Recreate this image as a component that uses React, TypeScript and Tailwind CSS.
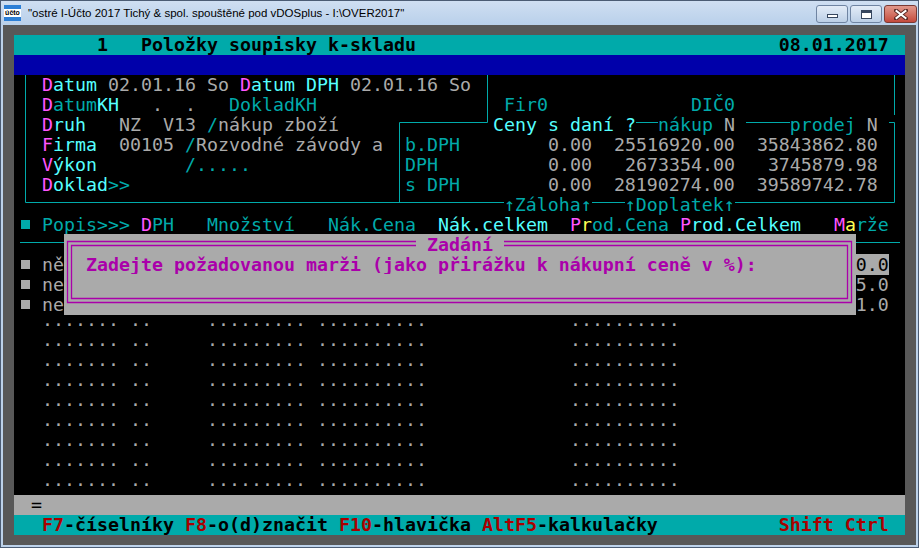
import React from 'react';

type Seg = [number, string, string];

const T = 'text-[#00aaaa]';
const C = 'text-[#55ffff]';
const M = 'text-[#ff55ff]';
const G = 'text-[#aaaaaa]';
const Y = 'text-[#ffff55]';
const K = 'text-black';
const R = 'text-[#aa0000]';
const DLG = 'bg-[#aaaaaa] text-[#aa00aa]';

function pad(s: string, n: number) {
  const len = [...s].length;
  return len >= n ? s : s + ' '.repeat(n - len);
}

function Row({ segs, bg = 'bg-black', bold = false }: { segs: Seg[]; bg?: string; bold?: boolean }) {
  const children: React.ReactNode[] = [];
  let col = 0;
  segs.forEach(([c, text, cls], i) => {
    if (c > col) children.push(' '.repeat(c - col));
    if (text === '■') {
      children.push(
        <span key={i} className="inline-flex h-[20px] w-[11px] items-start justify-center pt-[5px] align-top">
          <span className={`block h-[9px] w-[9px] ${cls}`} />
        </span>
      );
    } else {
      children.push(
        <span key={i} className={cls}>
          {text}
        </span>
      );
    }
    col = c + [...text].length;
  });
  return (
    <div className={`h-[20px] w-[891px] pl-[6px] whitespace-pre leading-[20px] ${bg} ${bold ? 'font-bold' : 'font-normal'}`}>
      {children}
    </div>
  );
}

const dots: Seg[] = [
  [2, '·······', G],
  [10, '··', G],
  [17, '·········', G],
  [27, '··········', G],
  [50, '··········', G],
];

const blank72 = ' '.repeat(72);
const dlgTitle = ' '.repeat(33) + 'Zadání' + ' '.repeat(33);
const dlgText = pad('  Zadejte požadovanou marži (jako přirážku k nákupní ceně v %):', 72);

function Lines() {
  const teal = '#00aaaa';
  const mag = '#aa00aa';
  return (
    <svg className="absolute left-[6px] top-0" width="880" height="500" viewBox="0 0 880 500">
      <g stroke={teal} strokeWidth="1" fill="none">
        <path d="M5.5 40 V167.5 H484" />
        <path d="M572 167.5 H605" />
        <path d="M715 167.5 H874.5 V87.5 H869" />
        <path d="M467.5 40 V87.5 H379.5 V167.5" />
        <path d="M616 87.5 H638" />
        <path d="M726 87.5 H770" />
        <path d="M874.5 40 V80" />
        <path d="M0 207.5 H44" />
        <path d="M836 207.5 H880" />
      </g>
      <g stroke={mag} strokeWidth="1.3" fill="none">
        <path d="M396 206.5 H47.5 V267.5 H831.5 V206.5 H484" />
        <path d="M396 210.5 H51.5 V263.5 H827.5 V210.5 H484" />
      </g>
    </svg>
  );
}

function DosScreen() {
  return (
    <div className="relative w-[891px] font-['DejaVu_Sans_Mono',monospace] text-[18.27px]">
      <Row bg="bg-[#00aaaa]" bold segs={[[7, '1', K], [11, 'Položky soupisky k-skladu', K], [69, '08.01.2017', K]]} />
      <Row bg="bg-[#0000aa]" segs={[]} />
      <Row
        segs={[
          [2, 'D', M],
          [3, 'atum', C],
          [8, '02.01.16 So', G],
          [20, 'D', M],
          [21, 'atum DPH', C],
          [30, '02.01.16 So', G],
        ]}
      />
      <Row
        segs={[
          [2, 'D', M],
          [3, 'atum', T],
          [7, 'KH', C],
          [12, '.', G],
          [15, '.', G],
          [19, 'DokladKH', T],
          [44, 'Fir0', T],
          [61, 'DIČ0', T],
        ]}
      />
      <Row
        segs={[
          [2, 'D', M],
          [3, 'ruh', C],
          [9, 'NZ  V13', G],
          [17, '/', T],
          [18, 'nákup zboží', G],
          [43, 'Ceny s daní ?', C],
          [58, 'nákup', T],
          [64, 'N', G],
          [70, 'prodej', T],
          [77, 'N', G],
        ]}
      />
      <Row
        segs={[
          [2, 'F', M],
          [3, 'irma', C],
          [9, '00105', G],
          [15, '/', T],
          [16, 'Rozvodné závody a', G],
          [35, 'b.DPH', T],
          [48, '0.00', G],
          [54, '25516920.00', G],
          [67, '35843862.80', G],
        ]}
      />
      <Row
        segs={[
          [2, 'V', M],
          [3, 'ýkon', C],
          [15, '/.....', T],
          [35, 'DPH', T],
          [48, '0.00', G],
          [55, '2673354.00', G],
          [68, '3745879.98', G],
        ]}
      />
      <Row
        segs={[
          [2, 'D', M],
          [3, 'oklad', C],
          [8, '>>', T],
          [35, 's DPH', T],
          [48, '0.00', G],
          [54, '28190274.00', G],
          [67, '39589742.78', G],
        ]}
      />
      <Row segs={[[44, '↑Záloha↑', T], [55, '↑Doplatek↑', T]]} />
      <Row
        segs={[
          [0, '■', 'bg-[#00aaaa]'],
          [2, 'Popis>>>', T],
          [11, 'D', M],
          [12, 'PH', T],
          [17, 'Množství', T],
          [28, 'Nák.Cena', T],
          [38, 'Nák.celkem', C],
          [50, 'P', M],
          [51, 'r', Y],
          [52, 'od.Cena', T],
          [60, 'P', M],
          [61, 'rod.Celkem', C],
          [74, 'M', M],
          [75, 'a', Y],
          [76, 'rže', T],
        ]}
      />
      <Row segs={[[4, dlgTitle, DLG + ' font-bold']]} />
      <Row
        segs={[
          [0, '■', 'bg-[#aaaaaa]'],
          [2, 'ně', G],
          [4, dlgText, DLG + ' font-bold'],
          [76, '0.0', 'bg-[#aaaaaa] text-black'],
        ]}
      />
      <Row segs={[[0, '■', 'bg-[#aaaaaa]'], [2, 'ne', G], [4, blank72, DLG], [76, '5.0', G]]} />
      <Row segs={[[0, '■', 'bg-[#aaaaaa]'], [2, 'ne', G], [4, blank72, DLG], [76, '1.0', G]]} />
      {Array.from({ length: 9 }).map((_, i) => (
        <Row key={i} segs={dots} />
      ))}
      <Row bg="bg-[#aaaaaa]" segs={[[1, '=', K]]} />
      <Row
        bg="bg-[#00aaaa]"
        bold
        segs={[
          [2, 'F7', R],
          [4, '-číselníky', K],
          [15, 'F8', R],
          [17, '-o(d)značit', K],
          [29, 'F10', R],
          [32, '-hlavička', K],
          [42, 'AltF5', R],
          [47, '-kalkulačky', K],
          [69, 'Shift Ctrl', R],
        ]}
      />
      <Lines />
    </div>
  );
}

function TitleBar() {
  return (
    <div className="flex h-[24px] items-start bg-gradient-to-b from-[#cfdff2] to-[#b9d0ea]">
      <div className="ml-[3px] mt-[4px] flex h-[16px] w-[17px] flex-col justify-center bg-[#2c7fd6]">
        <div className="flex h-[8px] items-center justify-center bg-white text-[7px] font-bold leading-[8px] text-black font-['Liberation_Sans',sans-serif]">
          účto
        </div>
      </div>
      <div className="ml-[7px] mt-[5px] text-[11.5px] leading-[14px] text-black font-['Liberation_Sans',sans-serif]">
        {'"ostré I-Účto 2017 Tichý & spol. spouštěné pod vDOSplus - I:\\OVER2017"'}
      </div>
      <div className="ml-auto mr-[1px] mt-[4px] flex gap-[2px]">
        <div className="flex h-[18px] w-[32px] items-end justify-center rounded-[3px] border border-[#6f84a2] bg-gradient-to-b from-[#e3ecf7] to-[#bccfe6] pb-[4px]">
          <div className="h-[4px] w-[11px] border border-[#36465e] bg-white" />
        </div>
        <div className="flex h-[18px] w-[32px] items-center justify-center rounded-[3px] border border-[#6f84a2] bg-gradient-to-b from-[#e3ecf7] to-[#bccfe6]">
          <div className="h-[9px] w-[11px] border border-[#36465e] border-t-[3px] bg-white" />
        </div>
        <div className="flex h-[18px] w-[33px] items-center justify-center rounded-[3px] border border-[#7a3a34] bg-gradient-to-b from-[#e0988c] to-[#c4493c]">
          <svg width="14" height="11" viewBox="0 0 14 11">
            <path d="M2 1.5 L12 9.5 M12 1.5 L2 9.5" stroke="#5a2a26" strokeWidth="4" strokeLinecap="square" />
            <path d="M2.5 2 L11.5 9 M11.5 2 L2.5 9" stroke="#ffffff" strokeWidth="2" strokeLinecap="square" />
          </svg>
        </div>
      </div>
    </div>
  );
}

export default function App() {
  return (
    <div className="h-[548px] w-[919px] overflow-hidden border border-[#4b5c74] bg-[#bdd2ea]">
      <TitleBar />
      <div className="mx-[2px] h-[520px] bg-[#585858] pl-[11px] pt-[10px]">
        <DosScreen />
      </div>
    </div>
  );
}
